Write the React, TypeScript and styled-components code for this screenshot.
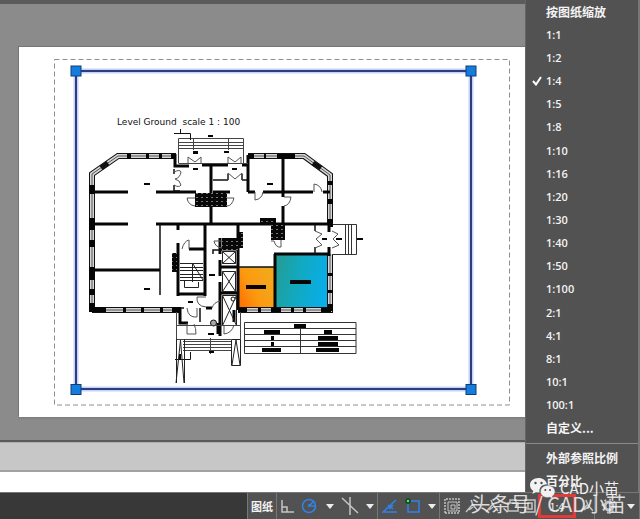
import React from 'react';
import styled, { createGlobalStyle, css } from 'styled-components';

const GlobalStyle = createGlobalStyle`
  * { box-sizing: border-box; }
  html, body, #root { height: 100%; }
  body {
    margin: 0;
    overflow: hidden;
    background: #3a3a3a;
    font-family: 'Noto Sans CJK SC', 'Noto Sans', sans-serif;
  }
  button { font: inherit; color: inherit; border: 0; padding: 0; background: none; }
  ul { margin: 0; padding: 0; list-style: none; }
`;

const Window = styled.div`
  position: relative;
  display: flex;
  flex-direction: column;
  min-height: 100%;
`;

const Workspace = styled.main`
  flex: 1;
  display: flex;
  padding: 43px 0 23px 19px;
  background: #8b8b8b;
  border-top: 4px solid #5b5b5b;
  border-bottom: 2px solid #5a5a5a;
`;

const Paper = styled.section`
  flex: 1;
  margin-right: 60px;
  background: #fff;
  box-shadow: -1px -1px 0 #757575, 0 1px 2px #777;
`;

const Drawing = styled.svg`
  display: block;
`;

const CommandHistory = styled.div`
  height: 30px;
  background: #c7c7c7;
  border-top: 1px solid #b0b0b0;
  border-bottom: 2px solid #a2a2a2;
`;

const CommandInput = styled.input`
  display: block;
  width: 100%;
  height: 20px;
  border: 0;
  padding: 0 8px;
  background: #fff;
  outline: none;
`;

const StatusBar = styled.footer`
  display: flex;
  justify-content: flex-end;
  height: 27px;
  border-top: 1px solid #777;
  background: #383838;
`;

const StatusTools = styled.div`
  display: flex;
  width: 393px;
  background: #525252;
  border-left: 1px solid #777;
`;

const ToolGroup = styled.div<{ $width: number }>`
  display: flex;
  align-items: center;
  justify-content: space-around;
  width: ${(p) => p.$width}px;
  border-right: 1px solid #767676;
`;

const ToolButton = styled.button<{ $active?: boolean }>`
  display: flex;
  align-items: center;
  justify-content: center;
  height: 24px;
  color: ${(p) => (p.$active ? '#2f83ea' : '#c4c4c4')};
`;

const SpaceButton = styled(ToolButton)`
  width: 100%;
  color: #f2f2f2;
  font-size: 11px;
  font-weight: 700;
`;

const ScaleButton = styled(ToolButton)`
  width: 38px;
  border: 3px solid #df3b38;
  color: #eee;
  font-size: 11px;
`;

const ScaleMenu = styled.div`
  position: absolute;
  top: 0;
  right: 0;
  bottom: 27px;
  width: 115px;
  display: flex;
  flex-direction: column;
  background: #525252;
  border-left: 1px solid #666;
  border-right: 2px solid #777;
`;

const MenuGroup = styled.ul<{ $fill?: boolean }>`
  display: grid;
  grid-auto-rows: 1fr;
  ${(p) =>
    p.$fill
      ? css`
          flex: 1;
          padding-bottom: 3px;
        `
      : css`
          height: 49px;
          border-top: 1px solid #8a8a8a;
          padding: 2px 0 0;
        `}
`;

const MenuItem = styled.button<{ $wide?: boolean }>`
  display: grid;
  grid-template-columns: 20px 1fr;
  align-items: center;
  width: 100%;
  height: 100%;
  color: #f4f4f4;
  font-family: ${(p) => (p.$wide ? "'Noto Sans CJK SC', sans-serif" : "'Open Sans', sans-serif")};
  font-size: ${(p) => (p.$wide ? 12 : 11)}px;
  font-weight: ${(p) => (p.$wide ? 700 : 600)};
  line-height: 16px;
  text-align: left;
  white-space: nowrap;
`;

const CheckCell = styled.span`
  display: flex;
  justify-content: flex-end;
  padding-right: 4px;
`;

const AccountMark = styled.div`
  position: absolute;
  right: 21px;
  bottom: 19px;
  display: flex;
  align-items: center;
  gap: 4px;
  color: #f0f0f0;
  font-size: 15px;
  line-height: 24px;
  pointer-events: none;
`;

const SourceMark = styled.div`
  position: absolute;
  right: 14px;
  bottom: 2px;
  color: rgba(240, 240, 240, 0.88);
  font-size: 20px;
  line-height: 26px;
  white-space: nowrap;
  pointer-events: none;
`;

const SCALES = [
  '按图纸缩放', '1:1', '1:2', '1:4', '1:5', '1:8', '1:10', '1:16', '1:20', '1:30',
  '1:40', '1:50', '1:100', '2:1', '4:1', '8:1', '10:1', '100:1', '自定义...',
];
const EXTRAS = ['外部参照比例', '百分比'];
const CURRENT = '1:4';

type Rect = [number, number, number, number];

const WINDOW_WALL =
  'M92 311V174L118 156H176M248 156H304L330 175V224M330 254V310H238M92 310H180';

const SOLID_WALLS =
  'M93 192H128M156 192H196M93 224H128M156 224H332M93 270H160M211 165V224M205 224V296' +
  'M178 224V230M178 243V296M177 294H206M189 249H205M175 154V166H189M202 165H228M242 165H248' +
  'M248 155V192M283 156V192M213 192H230M248 192H255M263 192H313M323 192H330M283 192V197M283 206V224' +
  'M238 224V310M329 224V232M329 247V256M274 254H330M275 254V310M220 238V254M220 260V276M220 282V336' +
  'M220 267H237M220 293H237M220 249H237M180 308V323H188M206 308H212M218 323V334M234 310V322';

const THIN_WALLS =
  'M160 224V295M238 267H275M174 174V169M174 185V191H180M213 180H228M242 180H247M228 180V174M242 180V174' +
  'M315 225V231M315 247V254M200 308V322M178 308H184M213 254V250H222';

const WALL_BLOCKS: Rect[] = [
  [89, 185, 6, 9], [89, 218, 6, 12], [89, 240, 6, 7], [89, 267, 6, 13], [89, 289, 6, 6],
  [89, 303, 6, 9], [127, 154, 4, 5], [146, 154, 3, 5], [159, 154, 3, 5], [171, 154, 5, 5],
  [90, 307, 16, 5], [123, 307, 3, 5], [141, 307, 3, 5], [160, 307, 3, 5], [172, 307, 9, 5],
  [248, 154, 6, 5], [264, 154, 2, 5], [277, 154, 18, 5], [328, 181, 5, 4], [328, 199, 5, 5],
  [328, 219, 5, 8], [328, 273, 5, 3], [328, 290, 5, 3], [328, 304, 5, 7], [238, 308, 9, 4],
  [258, 308, 3, 4], [271, 308, 10, 4], [291, 308, 3, 4], [303, 308, 3, 4], [321, 308, 10, 4],
];

const FIXTURES: Rect[] = [
  [195, 193, 32, 14], [260, 218, 16, 7], [271, 224, 14, 16], [222, 238, 16, 12],
  [238, 232, 5, 16], [172, 253, 5, 19],
];

const LABELS: Rect[] = [
  [144, 183, 6, 2], [193, 151, 5, 3], [193, 168, 5, 2], [208, 135, 5, 2], [224, 151, 5, 2],
  [232, 168, 5, 2], [267, 183, 6, 2], [322, 238, 5, 2], [336, 238, 6, 2], [357, 238, 6, 2],
  [144, 288, 6, 2], [188, 301, 5, 2], [209, 274, 6, 2], [208, 333, 6, 2], [209, 351, 5, 2],
  [246, 285, 20, 4], [290, 280, 21, 4], [179, 354, 2, 6],
];

const TABLE_VALUES: Rect[] = [
  [294, 324, 12, 4], [264, 330, 16, 4], [324, 330, 8, 4], [271, 336, 3, 4], [318, 336, 20, 4],
  [271, 342, 3, 4], [318, 342, 20, 4], [262, 348, 19, 4], [316, 348, 23, 4],
];

const DOORS =
  'M174 172Q180 169 181 172Q180 178 175 179Q180 180 181 185Q179 188 174 185' +
  'M188 164V157L195 162L201 157V164M228 164V157L235 162L241 157V164M228 180V173L235 179L242 173V180' +
  'M195 198H187Q188 205 195 206M227 198H234Q232 206 227 206M255 192V200Q262 199 263 192' +
  'M284 197H291Q290 205 284 206M314 192V184Q321 185 322 192M271 241H274Q276 248 281 247V240' +
  'M315 231L322 234L316 239L322 245L315 248M332 231L338 234L333 239L339 245L332 248' +
  'M182 249Q184 241 189 240V249M222 241H214Q215 247 222 248M206 297H197Q196 306 206 307M212 308Q214 302 220 301' +
  'M187 308Q188 318 197 317V308M187 323V334H196Q196 328 194 324M224 325V334Q232 333 234 325';

const blocks = (items: Rect[], fill = '#060606') =>
  items.map(([x, y, width, height]) => (
    <rect key={`${x}-${y}`} x={x} y={y} width={width} height={height} fill={fill} />
  ));

const FloorPlan = () => (
  <Drawing width="506" height="370" viewBox="19 47 506 370" role="img" aria-label="Level Ground floor plan">
    <defs>
      <linearGradient id="amber" x1="0" y1="1" x2="1" y2="0.4">
        <stop offset="0" stopColor="#ff6a00" />
        <stop offset="0.5" stopColor="#fb9a10" />
        <stop offset="1" stopColor="#f3a81c" />
      </linearGradient>
      <linearGradient id="aqua" x1="0" y1="0.2" x2="1" y2="0.4">
        <stop offset="0" stopColor="#239c94" />
        <stop offset="0.45" stopColor="#12a9bf" />
        <stop offset="1" stopColor="#08aeea" />
      </linearGradient>
      <pattern id="speckle" width="5" height="4" patternUnits="userSpaceOnUse">
        <rect width="5" height="4" fill="#080808" />
        <rect x="1" y="1" width="2" height="1" fill="#777" />
      </pattern>
    </defs>

    <rect x="54.5" y="59.5" width="455" height="345.5" fill="none" stroke="#8d8d8d" strokeDasharray="5 3" />
    <rect x="76" y="71" width="395" height="318" fill="none" stroke="#c6d2f3" strokeWidth="5" />
    <rect x="76" y="71" width="395" height="318" fill="none" stroke="#2b3e84" strokeWidth="2" />
    {[[76, 71], [471, 71], [76, 389.5], [471, 389.5]].map(([x, y]) => (
      <rect key={`${x}-${y}`} x={x - 5} y={y - 5} width="10" height="10" fill="#127ddf" stroke="#123c72" />
    ))}

    <text x="117" y="125" fontFamily="'DejaVu Sans', Verdana, sans-serif" fontSize="9" fill="#111">
      {'Level Ground\u00a0 scale 1 : 100'}
    </text>

    <rect x="238" y="267" width="37" height="42" fill="url(#amber)" />
    <rect x="275" y="254" width="54" height="55" fill="url(#aqua)" />

    <g fill="none" stroke="#111">
      <path d={WINDOW_WALL} strokeWidth="6" />
      <path d={WINDOW_WALL} strokeWidth="4" stroke="#d6d6d6" />
      <path d={WINDOW_WALL} strokeWidth="1" stroke="#555" />
      <path d="M101 168L108 163M313 163L321 168" strokeWidth="5" />
      <path d={SOLID_WALLS} strokeWidth="3" stroke="#060606" />
      <path d={THIN_WALLS} strokeWidth="1.5" />
      <path d={DOORS} strokeWidth="1" stroke="#555" />
      <path
        d="M178.500 163V138.500H243.500V154M178.500 142.500H243M178.500 145.500H243M178.500 148.500H243M178.500 163.500H248M193.500 138V150M228.500 138V150M243.500 150V164"
        stroke="#444"
      />
      <path d="M332 224.500H356.500V254.500H332M345.500 224V254M348.500 224V254M351.500 224V254" stroke="#333" />
      <path d="M174 133.500H190.500V140M180.500 129V134M175 359.500H190.500V352" />
      <path
        d="M180 263.500H203M180 267.500H203M180 270.500H203M180 274.500H203M180 277.500H203M180 280.500H203M192.500 263V282M193 264L203 280M184.500 281V287.500H198.500V282"
        stroke="#222"
      />
      <path
        d="M222.500 251.500H235.500V263.500H222.500ZL235.500 263.500M235.500 251.500L222.500 263.500M222.500 271.500H235.500V291.500H222.500ZL235.500 291.500M235.500 271.500L222.500 291.500M222.500 295.500H236.500V325.500H222.500ZL236.500 325.500M236.500 295.500L222.500 325.500"
        stroke="#222"
      />
      <circle cx="233" cy="299" r="2" fill="#fff" />
      <circle cx="213.500" cy="323" r="3" fill="#aaa" />
      <path d="M176.500 312V339.500H231M240.500 312V339.500M176 325.500H240M183 341.500H232M183 344.500H232M183 347.500H232M183 350.500H232M210.500 338V354" stroke="#444" />
      <path d="M176.500 339V383M184.500 339V383M180.500 340L176 383M180.500 340L184 383M231.500 339.500H240.500V365.500H231.500ZM236 340L232 365M236 340L240 365" stroke="#222" />
      <path d="M244.500 322.500H356V353.500H244.500ZM244.500 328.500H356M244.500 334.500H356M244.500 340.500H356M244.500 346.500H356M300.500 329V353.500" stroke="#333" />
    </g>
    {blocks(WALL_BLOCKS)}
    {blocks(FIXTURES, 'url(#speckle)')}
    {blocks(LABELS)}
    {blocks(TABLE_VALUES)}
  </Drawing>
);

const Caret = () => (
  <svg width="8" height="5" viewBox="0 0 8 5" aria-hidden="true">
    <path d="M0 0H8L4 5Z" fill="#ededed" />
  </svg>
);

const Glyph = ({ children, size = 18 }: { children: React.ReactNode; size?: number }) => (
  <svg width={size} height="18" viewBox={`0 0 ${size} 18`} fill="none" stroke="currentColor" strokeWidth="1.5" aria-hidden="true">
    {children}
  </svg>
);

const Figure = ({ size = 18 }: { size?: number }) => (
  <Glyph size={size}>
    <path d="M7 3L9 8L14 14M8 8L2 15M9 10L5 13" />
  </Glyph>
);

const WeChat = () => (
  <svg width="27" height="23" viewBox="0 0 27 23" aria-hidden="true">
    <path d="M9.500 1C4.500 1 1 4 1 8C1 10.500 2.300 12.600 4.300 14L3.400 17L7 15C8 15.300 9 15.400 10.500 15.300C9.800 10.500 13 7.500 18 7.300C17.300 3.500 13.800 1 9.500 1Z" fill="#f2f2f2" />
    <path d="M18.500 8.500C14.200 8.500 11.500 11.100 11.500 14.500C11.500 18 14.500 20.500 18.500 20.500L21 20.200L24 22L23.300 19.200C25 18 26 16.500 26 14.500C26 11.100 22.800 8.500 18.500 8.500Z" fill="#f2f2f2" stroke="#666" strokeWidth="0.500" />
    <g fill="#4c4c4c">
      <circle cx="6.500" cy="6" r="1.200" />
      <circle cx="12.500" cy="6" r="1.200" />
      <circle cx="16.300" cy="13" r="1" />
      <circle cx="21" cy="13" r="1" />
    </g>
  </svg>
);

const Item = ({ label }: { label: string }) => (
  <li role="none">
    <MenuItem type="button" role="menuitemradio" aria-checked={label === CURRENT} $wide={!/^\d/.test(label)}>
      <CheckCell>
        {label === CURRENT && (
          <svg width="10" height="10" viewBox="0 0 10 10" aria-hidden="true">
            <path d="M1 5L4 8.500L9 1" fill="none" stroke="#fff" strokeWidth="2" />
          </svg>
        )}
      </CheckCell>
      {label}
    </MenuItem>
  </li>
);

export default function App() {
  return (
    <>
      <GlobalStyle />
      <Window>
        <Workspace>
          <Paper>
            <FloorPlan />
          </Paper>
        </Workspace>
        <CommandHistory />
        <CommandInput aria-label="Command" />
        <StatusBar>
          <StatusTools>
            <ToolGroup $width={29}>
              <SpaceButton type="button">图纸</SpaceButton>
            </ToolGroup>
            <ToolGroup $width={101}>
              <ToolButton type="button" aria-label="Ortho">
                <Glyph size={14}><path d="M2 3V15H14M2 10H7V15" /></Glyph>
              </ToolButton>
              <ToolButton type="button" aria-label="Polar tracking" $active>
                <Glyph><circle cx="8" cy="9" r="6.500" /><path d="M15 9H8L13 4M8 9V7" /></Glyph>
              </ToolButton>
              <ToolButton type="button" aria-label="Polar options"><Caret /></ToolButton>
              <ToolButton type="button" aria-label="Isometric">
                <Glyph><path d="M9 0V18M1 1L17 16" /></Glyph>
              </ToolButton>
              <ToolButton type="button" aria-label="Isometric options"><Caret /></ToolButton>
            </ToolGroup>
            <ToolGroup $width={62}>
              <ToolButton type="button" aria-label="Snap tracking" $active>
                <Glyph size={16}><path d="M15 15H1L14 3M6 8L11 12M11 8L7 12" /></Glyph>
              </ToolButton>
              <ToolButton type="button" aria-label="Object snap" $active>
                <Glyph size={16}><path d="M3 7V15H14V4H6" /><circle cx="3" cy="4" r="2" fill="#6d7" stroke="#064d18" /></Glyph>
              </ToolButton>
              <ToolButton type="button" aria-label="Object snap options"><Caret /></ToolButton>
            </ToolGroup>
            <ToolGroup $width={155}>
              <ToolButton type="button" aria-label="Selection">
                <Glyph size={20}><path d="M4 16V2H18V16H4" strokeDasharray="2 1" /><path d="M7 5H16V14H7ZM10 8H14V12H10Z" strokeWidth="1" /></Glyph>
              </ToolButton>
              <ToolButton type="button" aria-label="Annotation visibility"><Figure /></ToolButton>
              <ToolButton type="button" aria-label="Auto scale"><Figure /></ToolButton>
              <ToolButton type="button" aria-label="Viewport lock">
                <Glyph size={16}><path d="M3 6H13V14H3ZM5 6V3H11V6" /></Glyph>
              </ToolButton>
              <ToolButton type="button" aria-label="Maximize viewport">
                <Glyph size={12}><path d="M1 3H11V15H1ZM4 6H8V12H4Z" /></Glyph>
              </ToolButton>
              <ScaleButton type="button" aria-label="Viewport scale 1:4">1:4</ScaleButton>
              <ToolButton type="button" aria-label="Synchronize"><Figure size={14} /></ToolButton>
            </ToolGroup>
            <ToolGroup $width={45}>
              <ToolButton type="button" aria-label="Settings">
                <Glyph>
                  <circle cx="9" cy="9" r="4" strokeWidth="3" />
                  <circle cx="9" cy="9" r="6.500" strokeDasharray="2 3" strokeWidth="2" />
                </Glyph>
              </ToolButton>
              <ToolButton type="button" aria-label="Settings options"><Caret /></ToolButton>
            </ToolGroup>
          </StatusTools>
        </StatusBar>
        <ScaleMenu role="menu" aria-label="Viewport scale">
          <MenuGroup $fill role="group">{SCALES.map((s) => <Item key={s} label={s} />)}</MenuGroup>
          <MenuGroup role="group">{EXTRAS.map((s) => <Item key={s} label={s} />)}</MenuGroup>
        </ScaleMenu>
        <AccountMark><WeChat /><span>CAD小苗</span></AccountMark>
        <SourceMark>头条号 / CAD小苗</SourceMark>
      </Window>
    </>
  );
}
